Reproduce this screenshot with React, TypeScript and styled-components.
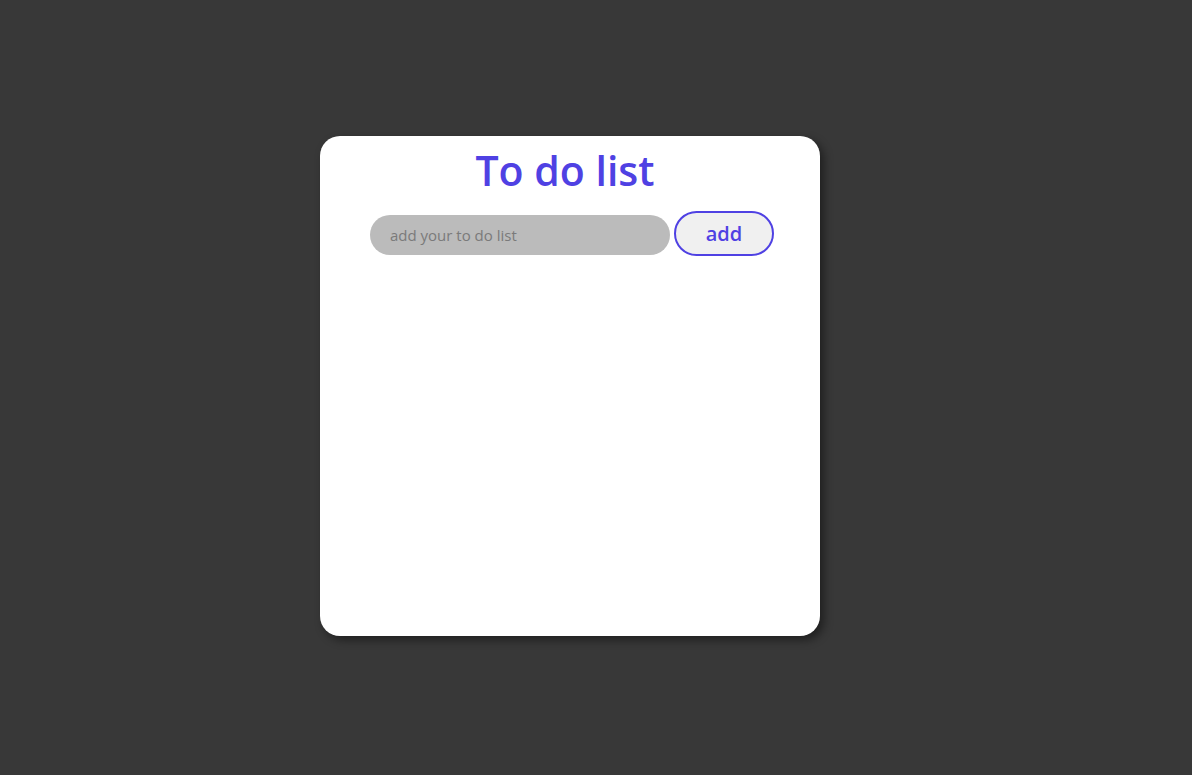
import { useState } from 'react'
import styled, { createGlobalStyle } from 'styled-components'

const GlobalStyle = createGlobalStyle`
  * {
    box-sizing: border-box;
  }
  body {
    margin: 0;
    background-color: #383838;
    font-family: 'Open Sans', 'DejaVu Sans', sans-serif;
  }
`

const App = () => {
  const [text, setText] = useState('')
  const [items, setItems] = useState<string[]>([])

  function handleAdd() {
    if (!text.trim()) return
    setItems([...items, text])
    setText('')
  }

  return (
    <Page>
      <GlobalStyle />
      <Card>
        <Title>To do list</Title>
        <Row>
          <Input placeholder="add your to do list" value={text} onChange={e => setText(e.target.value)} />
          <AddButton onClick={handleAdd}>add</AddButton>
        </Row>
        <List>
          {items.map((item, key) => (
            <li key={key}>{item}</li>
          ))}
        </List>
      </Card>
    </Page>
  )
}

export default App

const Page = styled.div`
  min-height: 100vh;
  padding: 136px 0 0 320px;
`

const Card = styled.div`
  width: 500px;
  height: 500px;
  background-color: #fff;
  border-radius: 20px;
  box-shadow: 4px 4px 10px rgba(0, 0, 0, 0.45);
  padding-top: 10px;
`

const Title = styled.h1`
  margin: 0 0 17px 0;
  text-align: center;
  font-size: 41px;
  font-weight: 600;
  color: #4f41e3;
  line-height: 48px;
  padding-right: 10px;
`

const Row = styled.div`
  display: flex;
  align-items: center;
  justify-content: center;
  gap: 4px;
  padding-left: 4px;
`

const Input = styled.input`
  width: 300px;
  height: 40px;
  border: none;
  outline: none;
  border-radius: 20px;
  background-color: #bbbbbb;
  padding: 0 20px;
  font-family: inherit;
  font-size: 15px;
  color: #333;
  margin-top: 2px;
  &::placeholder {
    color: #7a7a7a;
  }
`

const AddButton = styled.button`
  width: 100px;
  height: 45px;
  border: 2px solid #4f41e3;
  border-radius: 23px;
  background-color: #f0f0f0;
  color: #4f41e3;
  font-family: inherit;
  font-size: 20px;
  font-weight: 600;
  cursor: pointer;
`

const List = styled.ul`
  list-style: none;
  margin: 0;
  padding: 0;
`
